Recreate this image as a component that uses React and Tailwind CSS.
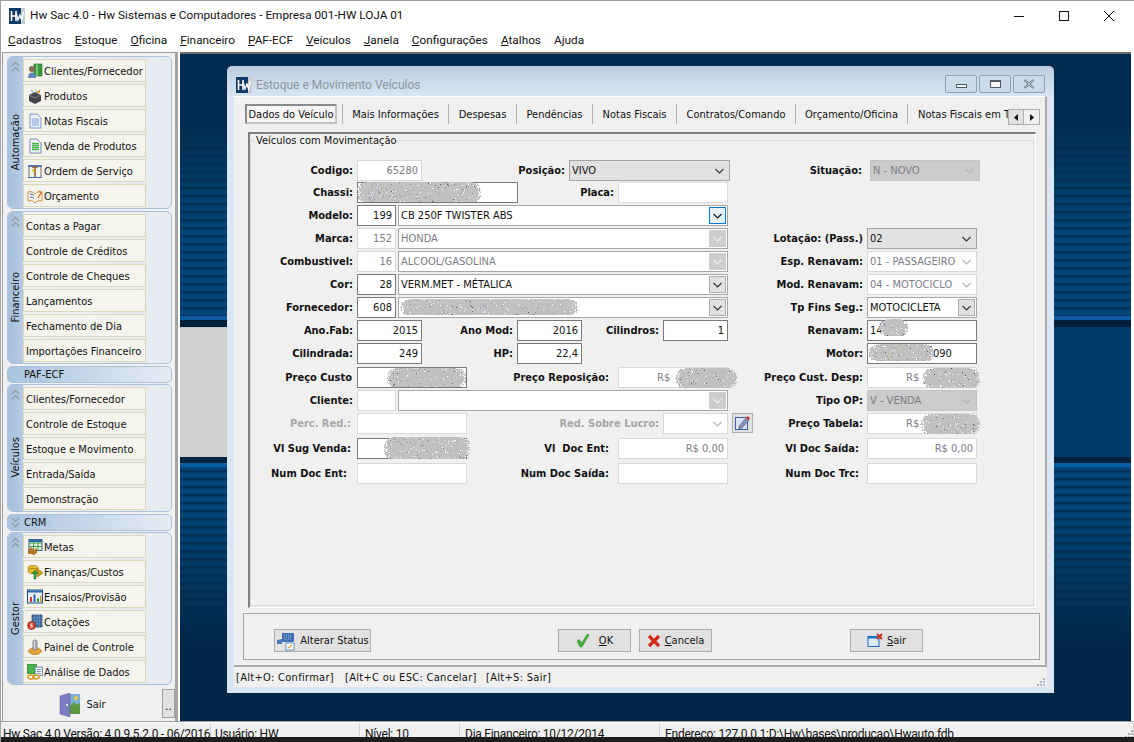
import React from 'react'
import clsx from 'clsx'
import { twMerge } from 'tailwind-merge'

const Logo = ({ className }) => (
    <svg className={className} viewBox="0 0 16 16">
        <rect width="16" height="16" fill="#c9ced4" />
        <rect width="12" height="16" fill="#123a66" />
        <path d="M2.5 3v10M7 3v10M2.5 8H7" stroke="#fff" strokeWidth="1.6" fill="none" />
        <path d="M7.5 6l1.5 6 2-5 1.5 5 2-8" stroke="#fff" strokeWidth="1.3" fill="none" />
    </svg>
)

const Chevron = ({ color = '#333', className }) => (
    <svg className={className} width="9" height="6" viewBox="0 0 9 6">
        <path d="M0.5 1l4 4 4-4" stroke={color} strokeWidth="1.1" fill="none" />
    </svg>
)

const DoubleChevron = ({ up = true }) => (
    <svg width="9" height="11" viewBox="0 0 9 11">
        <path d={up ? 'M1 5l3.500-3.500L8 5M1 10l3.500-3.500L8 10' : 'M1 1l3.500 3.500L8 1M1 6l3.500 3.500L8 6'} stroke="#8e9cab" strokeWidth="1.4" fill="none" />
    </svg>
)

// icons of the side bar, 16x16
const icons = {
    clientes: (
        <>
            <rect x="7" y="1" width="8" height="12" fill="#3b9a3f" stroke="#1f6b25" strokeWidth="0.6" />
            <rect x="9" y="1" width="2" height="12" fill="#6fc56f" />
            <circle cx="5" cy="6" r="3" fill="#8a6f55" />
            <path d="M1 15c0-4 2-5.500 4-5.500S9 11 9 15z" fill="#5d84b5" />
        </>
    ),
    produtos: (
        <>
            <path d="M2 7l6-3 6 3v6l-6 3-6-3z" fill="#44444c" />
            <path d="M2 7l6 3 6-3" stroke="#8a8a92" strokeWidth="0.8" fill="none" />
            <path d="M4 2l3 3M9 1v4M13 2l-3 3" stroke="#9fb2c8" strokeWidth="1.300" />
            <rect x="10" y="3" width="3" height="2" fill="#d9a21f" />
        </>
    ),
    notas: (
        <>
            <path d="M3 1h7l4 4v10H3z" fill="#eaf1fa" stroke="#6e8fbd" strokeWidth="0.9" />
            <path d="M5 6h7M5 8h7M5 10h7M5 12h7" stroke="#7fa3d2" strokeWidth="1" />
        </>
    ),
    venda: (
        <>
            <path d="M3 1h7l4 4v10H3z" fill="#eef3f8" stroke="#6e7fae" strokeWidth="0.9" />
            <path d="M5 5.500h7M5 7.500h7M5 9.500h7M5 11.500h7" stroke="#45b545" strokeWidth="1.300" />
        </>
    ),
    ordem: (
        <>
            <path d="M1 2h14v2H1z" fill="#4c82bd" />
            <path d="M1 14h14v1H1z" fill="#3f70aa" />
            <path d="M2 4v10M14 4v10" stroke="#6d6d6d" strokeWidth="1" />
            <path d="M5 4h6M8 4v10" stroke="#8a5b28" strokeWidth="1.500" />
            <path d="M5 6l2 3" stroke="#e8c62e" strokeWidth="2" />
        </>
    ),
    orcamento: (
        <>
            <path d="M1 4c3-1 5 0 7 2 2-2 4-3 7-2v9c-3-1-5 0-7 2-2-2-4-3-7-2z" fill="#f8f3e4" stroke="#c98a3a" strokeWidth="0.9" />
            <path d="M3 6c2 0 3 .5 4 1.500M3 9c2 0 3 .5 4 1.500" stroke="#4a7fc1" strokeWidth="1" />
            <path d="M12 3l2 2-3 5" stroke="#e26b2a" strokeWidth="1.300" fill="none" />
        </>
    ),
    metas: (
        <>
            <rect x="2" y="0.500" width="13" height="11" fill="#e3f2dd" stroke="#29527d" strokeWidth="0.9" />
            <path d="M2 4h13M2 7.500h13M6.500 1v10M11 1v10" stroke="#2f9a45" strokeWidth="0.9" />
            <rect x="2" y="1" width="13" height="2" fill="#2b6aa8" />
            <path d="M1 11l3-3 3 3 3-2v5l-3 2-3-1-3 0z" fill="#b9762b" />
        </>
    ),
    financas: (
        <>
            <ellipse cx="6" cy="4" rx="5" ry="2.500" fill="#e8bd2c" stroke="#9a7414" strokeWidth="0.7" />
            <ellipse cx="6" cy="7" rx="5" ry="2.500" fill="#e8bd2c" stroke="#9a7414" strokeWidth="0.7" />
            <path d="M10 4l6 5-6 4z" fill="#d6a11f" stroke="#8d6a12" strokeWidth="0.6" />
            <path d="M7 15V9.500H4.500L8 6l3.500 3.500H9V15z" fill="#35a13a" stroke="#1e6e23" strokeWidth="0.5" />
        </>
    ),
    ensaios: (
        <>
            <rect x="0.500" y="1" width="15" height="13" fill="#e8eef5" stroke="#1f4f8a" strokeWidth="1" />
            <rect x="1" y="1.500" width="14" height="2" fill="#2c69ad" />
            <path d="M3 13V8h2v5z" fill="#d23b2b" />
            <path d="M6.500 13V5.500h2V13z" fill="#2c69ad" />
            <path d="M10 13V9.500h2V13z" fill="#3c9a44" />
            <path d="M13 13V7h1.500v6z" fill="#d49a1e" />
        </>
    ),
    cotacoes: (
        <>
            <rect x="5" y="1" width="10" height="12" fill="#3a679f" stroke="#23466f" strokeWidth="0.7" />
            <path d="M7.500 1v12M10 1v12M12.500 1v12M5 4h10M5 7h10M5 10h10" stroke="#7ba0c8" strokeWidth="0.6" />
            <circle cx="4.500" cy="11.500" r="4" fill="#d33a2a" stroke="#8f2015" strokeWidth="0.6" />
            <path d="M5.800 9.800H3.800v1.700h1.500v1.700H3.200" stroke="#fff" strokeWidth="0.9" fill="none" />
        </>
    ),
    painel: (
        <>
            <path d="M1 12l2-2 2-1 3-1 3 1 2 1 2 2-2 2-2 1-3 1-3-1-2-1z" fill="#e9a33c" stroke="#b5761c" strokeWidth="0.7" />
            <rect x="6" y="1" width="4" height="10" rx="1.500" fill="#a9adb3" stroke="#6d7075" strokeWidth="0.7" />
            <rect x="7" y="2" width="1" height="8" fill="#dfe2e6" />
        </>
    ),
    analise: (
        <>
            <rect x="0.500" y="0.500" width="9" height="9" fill="#49b64a" stroke="#24792a" strokeWidth="0.7" />
            <rect x="8" y="3" width="7.500" height="8.500" fill="#f4f7fb" stroke="#4b6f9f" strokeWidth="0.8" />
            <path d="M10 5.500h4M10 7.500h4M10 9.500h4" stroke="#5a7faf" strokeWidth="0.8" />
            <ellipse cx="4" cy="13" rx="3.200" ry="2" fill="none" stroke="#d59a1e" strokeWidth="1.400" />
            <ellipse cx="9" cy="13" rx="3.200" ry="2" fill="none" stroke="#d59a1e" strokeWidth="1.400" />
        </>
    ),
}

const automacao = [
    ['Clientes/Fornecedor', 'clientes'],
    ['Produtos', 'produtos'],
    ['Notas Fiscais', 'notas'],
    ['Venda de Produtos', 'venda'],
    ['Ordem de Serviço', 'ordem'],
    ['Orçamento', 'orcamento'],
]
const financeiro = ['Contas a Pagar', 'Controle de Créditos', 'Controle de Cheques', 'Lançamentos', 'Fechamento de Dia', 'Importações Financeiro'].map((t) => [t])
const veiculos = ['Clientes/Fornecedor', 'Controle de Estoque', 'Estoque e Movimento', 'Entrada/Saída', 'Demonstração'].map((t) => [t])
const gestor = [
    ['Metas', 'metas'],
    ['Finanças/Custos', 'financas'],
    ['Ensaios/Provisão', 'ensaios'],
    ['Cotações', 'cotacoes'],
    ['Painel de Controle', 'painel'],
    ['Análise de Dados', 'analise'],
]

const menus = [
    ['C', 'adastros'],
    ['E', 'stoque'],
    ['O', 'ficina'],
    ['F', 'inanceiro'],
    ['P', 'AF-ECF'],
    ['V', 'eículos'],
    ['J', 'anela'],
    ['C', 'onfigurações'],
    ['A', 'talhos'],
]

const SideGroup = ({ title, items, className }) => (
    <div className={clsx('flex rounded-[6px] border border-[#a9c0da] bg-gradient-to-r from-[#f2f3f5] to-[#e6ebf2] overflow-hidden', className)}>
        <div className="w-[15px] shrink-0 flex flex-col items-center bg-gradient-to-r from-[#a7c0db] to-[#b4cbe2] pt-[4px]">
            <DoubleChevron />
            <div className="flex-1 flex items-center justify-center pt-[4px]">
                <span className="[writing-mode:vertical-rl] rotate-180 text-[11px] leading-[14px] text-[#111]">{title}</span>
            </div>
        </div>
        <div className="flex flex-col gap-[2px] pt-[2px] pb-[1px]">
            {items.map(([label, icon]) => (
                <div key={label} className="w-[123px] h-[23px] flex items-center bg-[#f5f4ec] border border-[#dbd9ba] text-[11px] text-[#111] pl-[2px] whitespace-nowrap">
                    {icon ? (
                        <svg className="w-[16px] h-[16px] ml-[1px] mr-[1px] shrink-0" viewBox="0 0 16 16">{icons[icon]}</svg>
                    ) : null}
                    <span className="pt-[3px]">{label}</span>
                </div>
            ))}
        </div>
    </div>
)

const SideHeader = ({ title, chevron, className }) => (
    <div className={clsx('h-[17px] flex items-center rounded-[5px] border border-[#a9c0da] bg-gradient-to-r from-[#a9c3de] to-[#e6ecf4] text-[11px] text-[#111]', className)}>
        <div className="w-[15px] shrink-0 flex justify-center">{chevron ? <DoubleChevron up={false} /> : null}</div>
        <span className="pl-[1px] pt-[1px]">{title}</span>
    </div>
)

const Sidebar = () => (
    <aside className="w-[176px] ml-[1px] shrink-0 flex flex-col bg-[#f0f0f0] border-t border-l border-[#9a9a9a] border-r-[3px] border-r-[#a4a4a4] pt-[3px] pl-[4px] pr-[3px]">
        <div className="flex flex-col gap-[2px]">
            <SideGroup title="Automação" items={automacao} />
            <SideGroup title="Financeiro" items={financeiro} />
            <SideHeader title="PAF-ECF" />
        </div>
        <div className="flex flex-col mt-[1px]">
            <SideGroup title="Veículos" items={veiculos} />
            <SideHeader title="CRM" chevron className="mt-[2px]" />
            <SideGroup title="Gestor" items={gestor} className="mt-[1px]" />
        </div>
        <div className="flex-1 flex items-center mt-[1px] -mr-[3px]">
            <div className="flex-1 flex items-center justify-center gap-[5px] pr-[4px] pt-[3px] text-[11px] text-[#111]">
                <svg width="22" height="24" viewBox="0 0 22 24">
                    <path d="M11 1h10v20H11z" fill="#7fb0d8" />
                    <path d="M11 13l4-4 3 3 3-2v11H11z" fill="#5b9a3c" />
                    <circle cx="17" cy="5" r="2" fill="#f0d040" />
                    <path d="M1 3l10-3v24L1 21z" fill="#7d7fc4" stroke="#55578f" strokeWidth="0.5" />
                    <circle cx="8" cy="12" r="1" fill="#fff" />
                </svg>
                Sair
            </div>
            <div className="w-[13px] h-[29px] bg-[#e1e1e1] border border-[#a0a0a0] flex items-end justify-center pb-[6px] text-[11px] leading-[8px]">..</div>
        </div>
    </aside>
)

// speckled blob of the blurred parts of the picture
const Smudge = ({ w, h, seed = 1, className }) => {
    const rects = []
    let s = seed * 7919 + 13
    const rnd = () => {
        s = (s + 0x6d2b79f5) | 0
        let t = Math.imul(s ^ (s >>> 15), 1 | s)
        t = (t + Math.imul(t ^ (t >>> 7), 61 | t)) ^ t
        return ((t ^ (t >>> 14)) >>> 0) / 4294967296
    }
    const greys = ['#c0c0c0', '#bcbcbc', '#c6c6c6', '#c2c2c2']
    const specks = ['#555566', '#7a8fc0', '#c0a070', '#8090a0']
    for (let y = 0; y < h; y++) {
        const edge = 1 - Math.pow((y - h / 2) / (h / 2), 2)
        const inset = (1 - Math.sqrt(Math.max(edge, 0))) * 8
        for (let x = 0; x < w; x++) {
            const d = Math.min(x - inset, w - inset - x)
            if (d < 0) continue
            if (rnd() < (d < 3 ? 0.35 : 0.02)) continue
            const speck = rnd() < 0.025
            const fill = speck ? specks[Math.floor(rnd() * specks.length)] : greys[Math.floor(rnd() * greys.length)]
            rects.push(<rect key={x + '-' + y} x={x} y={y} width="1" height="1" fill={fill} />)
        }
    }
    return (
        <svg className={clsx('absolute', className)} width={w} height={h} shapeRendering="crispEdges">
            {rects}
        </svg>
    )
}

const Row = ({ className, children }) => <div className={clsx('flex h-[21px] items-stretch', className)}>{children}</div>

const Lbl = ({ w, pr = 'pr-[4px]', dim, children }) => (
    <div className={clsx('flex items-center justify-end pt-[2px] font-bold text-[11px] whitespace-nowrap shrink-0', w, pr, dim ? 'text-[#a6a6a6]' : 'text-[#111]')}>{children}</div>
)

const borders = { dark: 'border-[#7a7a7a]', mid: 'border-[#a6a6a6]', light: 'border-[#d9d9d9]' }

const Field = ({ w, b = 'light', right, dim, className, children }) => (
    <div className={twMerge('relative flex items-center shrink-0 bg-white border pl-[2px] pr-[3px] pt-[2px] text-[11px] whitespace-nowrap', w, borders[b], right && 'justify-end', dim ? 'text-[#7c7c86]' : 'text-[#111]', className)}>{children}</div>
)

// text box with a drop button at the right
const Combo = ({ w, b = 'mid', dim, btn = 'plain', className, children }) => (
    <Field w={w} b={b} dim={dim} className={twMerge('justify-between pr-[1px]', className)}>
        <span>{children}</span>
        {btn === 'plain' && (
            <span className="w-[17px] h-[17px] -mt-[2px] flex items-center justify-center">
                <Chevron color={dim ? '#b4b4b4' : '#333'} />
            </span>
        )}
        {btn === 'gray' && (
            <span className={clsx('w-[17px] h-[17px] -mt-[2px] flex items-center justify-center border', dim ? 'bg-[#cdcdcd] border-[#cdcdcd]' : 'bg-[#e1e1e1] border-[#adadad]')}>
                <Chevron color={dim ? '#eee' : '#333'} />
            </span>
        )}
        {btn === 'focus' && (
            <span className="w-[17px] h-[17px] -mt-[2px] flex items-center justify-center bg-[#e5f1fb] border border-[#0078d7]">
                <Chevron color="#111" />
            </span>
        )}
    </Field>
)

const FormRows = () => (
    <div className="flex flex-col">
        <Row>
            <Lbl w="w-[106px]">Codigo:</Lbl>
            <Field w="w-[65px]" right dim>65280</Field>
            <Lbl w="w-[147px]">Posição:</Lbl>
            <Combo w="w-[161px]" className="bg-[#e1e1e1]">VIVO</Combo>
            <Lbl w="w-[140px]" pr="pr-[8px]">Situação:</Lbl>
            <Combo w="w-[110px]" dim className="bg-[#cbcbcb] border-[#c4c4c4]">N - NOVO</Combo>
        </Row>
        <Row className="mt-[1px]">
            <Lbl w="w-[106px]">Chassi:</Lbl>
            <Field w="w-[161px]" b="dark"><Smudge w={125} h={20} seed={2} className="-left-[2px] -top-[1px]" /></Field>
            <Lbl w="w-[100px]">Placa:</Lbl>
            <Field w="w-[110px]" />
        </Row>
        <Row className="mt-[2px]">
            <Lbl w="w-[106px]">Modelo:</Lbl>
            <Field w="w-[39px]" b="dark" right>199</Field>
            <Combo w="w-[330px]" btn="focus" className="ml-[2px]">CB 250F TWISTER ABS</Combo>
        </Row>
        <Row className="mt-[2px]">
            <Lbl w="w-[106px]">Marca:</Lbl>
            <Field w="w-[39px]" right dim>152</Field>
            <Combo w="w-[330px]" dim btn="gray" className="ml-[2px]">HONDA</Combo>
            <Lbl w="w-[139px]">Lotação: (Pass.)</Lbl>
            <Combo w="w-[110px]" className="bg-[#e1e1e1]">02</Combo>
        </Row>
        <Row className="mt-[2px]">
            <Lbl w="w-[106px]">Combustivel:</Lbl>
            <Field w="w-[39px]" right dim>16</Field>
            <Combo w="w-[330px]" dim btn="gray" className="ml-[2px]">ALCOOL/GASOLINA</Combo>
            <Lbl w="w-[139px]">Esp. Renavam:</Lbl>
            <Combo w="w-[110px]" dim b="light">01 - PASSAGEIRO</Combo>
        </Row>
        <Row className="mt-[2px]">
            <Lbl w="w-[106px]">Cor:</Lbl>
            <Field w="w-[39px]" b="dark" right>28</Field>
            <Combo w="w-[330px]" btn="gray" className="ml-[2px]">VERM.MET - MÉTALICA</Combo>
            <Lbl w="w-[139px]">Mod. Renavam:</Lbl>
            <Combo w="w-[110px]" dim b="light">04 - MOTOCICLO</Combo>
        </Row>
        <Row className="mt-[2px]">
            <Lbl w="w-[106px]">Fornecedor:</Lbl>
            <Field w="w-[39px]" b="dark" right>608</Field>
            <Combo w="w-[330px]" btn="gray" className="ml-[2px]"><Smudge w={178} h={16} seed={3} className="left-[1px] top-[1px]" /></Combo>
            <Lbl w="w-[139px]">Tp Fins Seg.:</Lbl>
            <Combo w="w-[110px]" btn="gray">MOTOCICLETA</Combo>
        </Row>
        <Row className="mt-[2px]">
            <Lbl w="w-[106px]">Ano.Fab:</Lbl>
            <Field w="w-[65px]" b="dark" right>2015</Field>
            <Lbl w="w-[95px]">Ano Mod:</Lbl>
            <Field w="w-[65px]" b="dark" right>2016</Field>
            <Lbl w="w-[81px]">Cilindros:</Lbl>
            <Field w="w-[65px]" b="dark" right>1</Field>
            <Lbl w="w-[139px]">Renavam:</Lbl>
            <Field w="w-[110px]" b="dark">14<Smudge w={30} h={17} seed={4} className="left-[10px] -top-[2px]" /></Field>
        </Row>
        <Row className="mt-[2px]">
            <Lbl w="w-[106px]">Cilindrada:</Lbl>
            <Field w="w-[65px]" b="dark" right>249</Field>
            <Lbl w="w-[95px]">HP:</Lbl>
            <Field w="w-[65px]" b="dark" right>22,4</Field>
            <Lbl w="w-[285px]">Motor:</Lbl>
            <Field w="w-[110px]" b="dark" className="pl-[65px]">090<Smudge w={66} h={17} seed={5} className="left-[0px] top-[0px]" /></Field>
        </Row>
        <Row className="mt-[3px]">
            <Lbl w="w-[106px]" pr="pr-[5px]">Preço Custo</Lbl>
            <Field w="w-[110px]" b="dark"><Smudge w={80} h={19} seed={6} className="left-[28px] top-[0px]" /></Field>
            <Lbl w="w-[151px]" pr="pr-[9px]">Preço Reposição:</Lbl>
            <Field w="w-[110px]" dim className="pl-[38px]">R$<Smudge w={62} h={20} seed={7} className="left-[56px] top-[0px]" /></Field>
            <Lbl w="w-[139px]">Preço Cust. Desp:</Lbl>
            <Field w="w-[110px]" dim className="pl-[38px]">R$<Smudge w={58} h={20} seed={8} className="left-[54px] top-[0px]" /></Field>
        </Row>
        <Row className="mt-[2px]">
            <Lbl w="w-[106px]">Cliente:</Lbl>
            <Field w="w-[39px]" />
            <Combo w="w-[330px]" dim btn="gray" className="ml-[2px]" />
            <Lbl w="w-[139px]">Tipo OP:</Lbl>
            <Combo w="w-[110px]" dim className="bg-[#cbcbcb] border-[#c4c4c4]">V - VENDA</Combo>
        </Row>
        <Row className="mt-[2px]">
            <Lbl w="w-[106px]" pr="pr-[6px]" dim>Perc. Red.:</Lbl>
            <Field w="w-[110px]" />
            <Lbl w="w-[196px]" dim>Red. Sobre Lucro:</Lbl>
            <Combo w="w-[65px]" dim b="light" />
            <div className="ml-[4px] w-[21px] h-[20px] bg-[#e1e1e1] border border-[#adadad] flex items-center justify-center">
                <svg width="16" height="16" viewBox="0 0 16 16">
                    <rect x="0.500" y="2.500" width="12" height="12" fill="#d9e6f6" stroke="#3a5fa8" />
                    <path d="M4 11l7-8 3 2-7 8-3 1z" fill="#8a8fc4" stroke="#444" strokeWidth="0.500" />
                    <path d="M11 3l1.500-2L15 3l-1 2z" fill="#d93a2a" />
                </svg>
            </div>
            <Lbl w="w-[114px]">Preço Tabela:</Lbl>
            <Field w="w-[110px]" dim className="pl-[38px]">R$<Smudge w={60} h={20} seed={9} className="left-[52px] top-[0px]" /></Field>
        </Row>
        <Row className="mt-[4px]">
            <Lbl w="w-[106px]" pr="pr-[6px]">Vl Sug Venda:</Lbl>
            <Field w="w-[110px]" b="dark"><Smudge w={87} h={22} seed={10} className="left-[25px] -top-[2px]" /></Field>
            <Lbl w="w-[151px]" pr="pr-[9px]">{'Vl\u00a0 Doc Ent:'}</Lbl>
            <Field w="w-[110px]" right dim>R$ 0,00</Field>
            <Lbl w="w-[139px]" pr="pr-[8px]">Vl Doc Saída:</Lbl>
            <Field w="w-[110px]" right dim>R$ 0,00</Field>
        </Row>
        <Row className="mt-[4px]">
            <Lbl w="w-[106px]" pr="pr-[10px]">Num Doc Ent:</Lbl>
            <Field w="w-[110px]" />
            <Lbl w="w-[151px]" pr="pr-[9px]">Num Doc Saída:</Lbl>
            <Field w="w-[110px]" />
            <Lbl w="w-[139px]" pr="pr-[8px]">Num Doc Trc:</Lbl>
            <Field w="w-[110px]" />
        </Row>
    </div>
)

const tabs = [
    ['Mais Informações', 'w-[106px]'],
    ['Despesas', 'w-[68px]'],
    ['Pendências', 'w-[76px]'],
    ['Notas Fiscais', 'w-[84px]'],
    ['Contratos/Comando', 'w-[119px]'],
    ['Orçamento/Oficina', 'w-[112px]'],
]

const Tabs = () => (
    <div className="relative h-[35px] flex pl-[11px] pt-[7px] text-[11px] text-[#111]">
        <div className="w-[92px] h-[20px] bg-[#f4f4f4] border-2 border-[#c4c4c4] border-t-[#8a8a8a] border-l-[#8a8a8a] flex items-center justify-center pt-[2px] whitespace-nowrap">Dados do Veículo</div>
        <div className="w-[6px] h-[20px] border-r border-[#b0b0b0]" />
        {tabs.map(([label, w]) => (
            <div key={label} className={clsx('h-[20px] flex items-center justify-center pt-[2px] border-r border-[#b0b0b0] whitespace-nowrap', w)}>{label}</div>
        ))}
        <div className="w-[100px] h-[20px] overflow-hidden flex items-center pl-[10px] pt-[2px] whitespace-nowrap">Notas Fiscais em Transito</div>
        <div className="mt-[5px] h-[16px] flex">
            <div className="w-[16px] bg-[#e1e1e1] border border-[#adadad] flex items-center justify-center">
                <svg width="4" height="7" viewBox="0 0 4 7"><path d="M4 0v7L0 3.500z" fill="#111" /></svg>
            </div>
            <div className="w-[16px] bg-[#f0f0f0] border border-l-0 border-[#adadad] flex items-center justify-center">
                <svg width="4" height="7" viewBox="0 0 4 7"><path d="M0 0v7l4-3.500z" fill="#111" /></svg>
            </div>
        </div>
    </div>
)

const Btn = ({ w, className, icon, children }) => (
    <button className={clsx('h-[23px] flex items-center justify-center gap-[4px] bg-[#e1e1e1] border border-[#adadad] text-[11px] text-[#111] shrink-0', w, className)}>
        {icon}
        <span className="pt-[2px]">{children}</span>
    </button>
)

const Dialog = () => (
    <div className="absolute left-[47px] top-[12px] w-[827px] h-[627px] flex flex-col rounded-t-[5px] bg-[#dae6f3] px-[7px] pb-[7px] bg-gradient-to-b from-[#bdcddf] from-0% to-[#dae6f3] to-[5%]">
        <div className="h-[30px] shrink-0 flex items-center pt-[8px]">
            <Logo className="w-[16px] h-[16px] ml-[2px]" />
            <span className="ml-[4px] text-[12px] text-[#8d959e] font-['Roboto',sans-serif]">Estoque e Movimento Veículos</span>
            <div className="ml-auto flex gap-[2px] mr-[2px] -mt-[2px]">
                <div className="w-[32px] h-[18px] rounded-[2px] border border-[#8b9fb5] bg-[#ccdbe9] flex items-center justify-center"><div className="w-[11px] h-[4px] mt-[4px] bg-[#f4f6f8] border border-[#4f5a66]" /></div>
                <div className="w-[32px] h-[18px] rounded-[2px] border border-[#8b9fb5] bg-[#ccdbe9] flex items-center justify-center"><div className="w-[11px] h-[8px] bg-[#f4f6f8] border border-[#4f5a66] border-t-2" /></div>
                <div className="w-[32px] h-[18px] rounded-[2px] border border-[#8b9fb5] bg-[#ccdbe9] flex items-center justify-center">
                    <svg width="12" height="10" viewBox="0 0 12 10"><path d="M1.500 1l9 8M10.500 1l-9 8" stroke="#5b6672" strokeWidth="2.200" /><path d="M1.500 1l9 8M10.500 1l-9 8" stroke="#f4f6f8" strokeWidth="0.800" /></svg>
                </div>
            </div>
        </div>
        <div className="flex-1 flex flex-col bg-[#f0f0f0]">
            <div className="h-[571px] shrink-0 flex flex-col border-t border-white border-r-2 border-b-2 border-r-[#ababab] border-b-[#ababab]">
                <Tabs />
                <div className="ml-[14px] w-[788px] h-[476px] shrink-0 border-t-2 border-l-2 border-[#808080] border-r border-b border-r-white border-b-white">
                    <fieldset className="h-[472px] w-[784px] border border-[#dedede]">
                        <legend className="ml-[4px] px-[1px] text-[11px] leading-[12px] pt-[1px] text-[#111]">Veículos com Movimentação</legend>
                        <div className="pt-[13px]">
                            <FormRows />
                        </div>
                    </fieldset>
                </div>
                <div className="mt-[5px] ml-[9px] w-[797px] h-[47px] shrink-0 border border-[#a6a6a6] flex items-start pt-[15px] pl-[30px]">
                    <Btn w="w-[97px]" icon={
                        <svg width="20" height="20" viewBox="0 0 20 20">
                            <rect x="6" y="2" width="12" height="9" rx="1" fill="#3f6fb5" />
                            <path d="M8 4h8M8 6h8M8 8h8" stroke="#a9c5ea" strokeWidth="0.800" strokeDasharray="1 1" />
                            <path d="M1 9l5-1v5H1z" fill="#4b78b8" />
                            <rect x="10" y="12" width="8" height="7" fill="#fff" stroke="#4b78b8" strokeWidth="0.800" />
                            <path d="M12 17l4-3" stroke="#d8a020" strokeWidth="1.200" />
                        </svg>
                    }>Alterar Status</Btn>
                    <Btn w="w-[73px]" className="ml-[187px] gap-[9px]" icon={
                        <svg width="14" height="15" viewBox="0 0 14 15"><path d="M1 8l2.500-1.500L5.500 10 11.500 1 13 2 6 14H4z" fill="#46b03a" stroke="#2d8426" strokeWidth="0.500" /></svg>
                    }><u>O</u>K</Btn>
                    <Btn w="w-[73px]" className="ml-[8px]" icon={
                        <svg width="14" height="14" viewBox="0 0 14 14"><path d="M2 2l10 10M12 2L2 12" stroke="#d42a1c" strokeWidth="3.200" /></svg>
                    }><u>C</u>ancela</Btn>
                    <Btn w="w-[73px]" className="ml-[138px]" icon={
                        <svg width="16" height="15" viewBox="0 0 16 15">
                            <rect x="1" y="3.500" width="11" height="10" fill="#dcebfb" stroke="#1e6cc4" />
                            <rect x="1" y="3.500" width="11" height="2" fill="#1e6cc4" />
                            <path d="M10 1l5 5M15 1l-5 5" stroke="#d42a1c" strokeWidth="1.800" />
                        </svg>
                    }><u>S</u>air</Btn>
                </div>
            </div>
            <div className="relative flex-1 flex items-center pl-[2px] pt-[3px] text-[11px] tracking-[0.3px] text-[#111]">
                <span className="w-[109px]">[Alt+O: Confirmar]</span>
                <span className="w-[141px]">[Alt+C ou ESC: Cancelar]</span>
                <span>[Alt+S: Sair]</span>
                <Grip className="absolute right-[2px] bottom-[1px]" />
            </div>
        </div>
    </div>
)

const Grip = ({ className }) => (
    <svg className={className} width="8" height="8" viewBox="0 0 8 8">
        <path d="M6 0h2v2H6zM3 3h2v2H3zM6 3h2v2H6zM0 6h2v2H0zM3 6h2v2H3zM6 6h2v2H6z" fill="#b4b4b4" />
    </svg>
)

const Desktop = () => (
    <main className="relative flex-1 flex flex-col min-w-0 border-t-[2px] border-[#6e6e6e] ml-[2px] mr-[3px]">
        <div className="h-[273px] shrink-0 bg-[linear-gradient(to_top,#011f3a_0,#011f3a_7px,#0a5a9e_7px,#0a5a9e_11px,transparent_11px),linear-gradient(to_bottom,#012c50_0%,#012c50_25%,#012c5000_65%),repeating-linear-gradient(to_bottom,#02406f_0px,#034a80_4px,#012c50_6px,#02406f_8px)]" />
        <div className="h-[130px] shrink-0 flex bg-[#003a68]">
            <div className="w-[400px] bg-[#d1d1d1] border-t border-dotted border-[#c0c0c0]" />
        </div>
        <div className="flex-1 bg-[linear-gradient(to_bottom,#01233f_0,#01233f_6px,#0a5a9e_6px,#0a5a9e_10px,transparent_10px),linear-gradient(to_top,#012848_0%,#012848_30%,#01284800_80%),repeating-linear-gradient(to_bottom,#02406f_0px,#034a80_4px,#012c50_6px,#02406f_8px)]" />
        <Dialog />
    </main>
)

const cells = [
    ['Hw Sac 4.0 Versão: 4.0.9.5.2.0 - 06/2016', 'w-[210px] pl-[2px]'],
    ['Usuário: HW', 'w-[149px] pl-[4px]'],
    ['Nível: 10', 'w-[100px] pl-[5px]'],
    ['Dia Financeiro: 10/12/2014', 'w-[200px] pl-[5px]'],
    ['Endereço: 127.0.0.1:D:\\Hw\\bases\\producao\\Hwauto.fdb', 'flex-1 pl-[5px]'],
]

const StatusBar = () => (
    <footer className="relative h-[15px] shrink-0 flex overflow-hidden bg-[#f0f0f0] border-t border-[#fdfdfd] text-[12px] leading-[22px] tracking-[-0.25px] text-[#111] font-['Roboto',sans-serif]">
        {cells.map(([text, w]) => (
            <div key={text} className={clsx('whitespace-nowrap border-r border-[#d4d4d4] h-[19px]', w)}>{text}</div>
        ))}
        <Grip className="absolute right-[1px] -bottom-[1px]" />
    </footer>
)

export default function App() {
    return (
        <div className="relative w-[1134px] h-[742px] overflow-hidden flex flex-col bg-white border-t border-l border-[#a0a0a0] font-['DejaVu_Sans_Condensed','Noto_Sans',sans-serif]">
            <header className="h-[29px] shrink-0 flex items-center font-['Roboto',sans-serif]">
                <Logo className="w-[16px] h-[16px] ml-[8px]" />
                <span className="ml-[5px] text-[11.75px] text-[#111]">Hw Sac 4.0 - Hw Sistemas e Computadores - Empresa 001-HW LOJA 01</span>
                <div className="ml-auto flex items-center gap-[35px] pr-[20px]">
                    <svg width="10" height="10" viewBox="0 0 10 10"><path d="M0 5.500h10" stroke="#111" /></svg>
                    <svg width="10" height="10" viewBox="0 0 10 10"><rect x="0.500" y="0.500" width="9" height="9" fill="none" stroke="#111" /></svg>
                    <svg width="10" height="10" viewBox="0 0 10 10"><path d="M0 0l10 10M10 0L0 10" stroke="#111" /></svg>
                </div>
            </header>
            <nav className="h-[22px] shrink-0 flex items-center gap-[13px] pl-[7px] text-[11.8px] text-[#111] font-['Roboto',sans-serif]">
                {menus.map(([first, rest]) => (
                    <span key={first + rest}><u>{first}</u>{rest}</span>
                ))}
                <span>A<u>j</u>uda</span>
            </nav>
            <div className="flex-1 flex min-h-0">
                <Sidebar />
                <Desktop />
            </div>
            <div className="h-[1px] shrink-0 bg-[#a0a0a0]" />
            <StatusBar />
            <div className="h-[5px] shrink-0 bg-[#1e1e1e]" />
        </div>
    )
}
